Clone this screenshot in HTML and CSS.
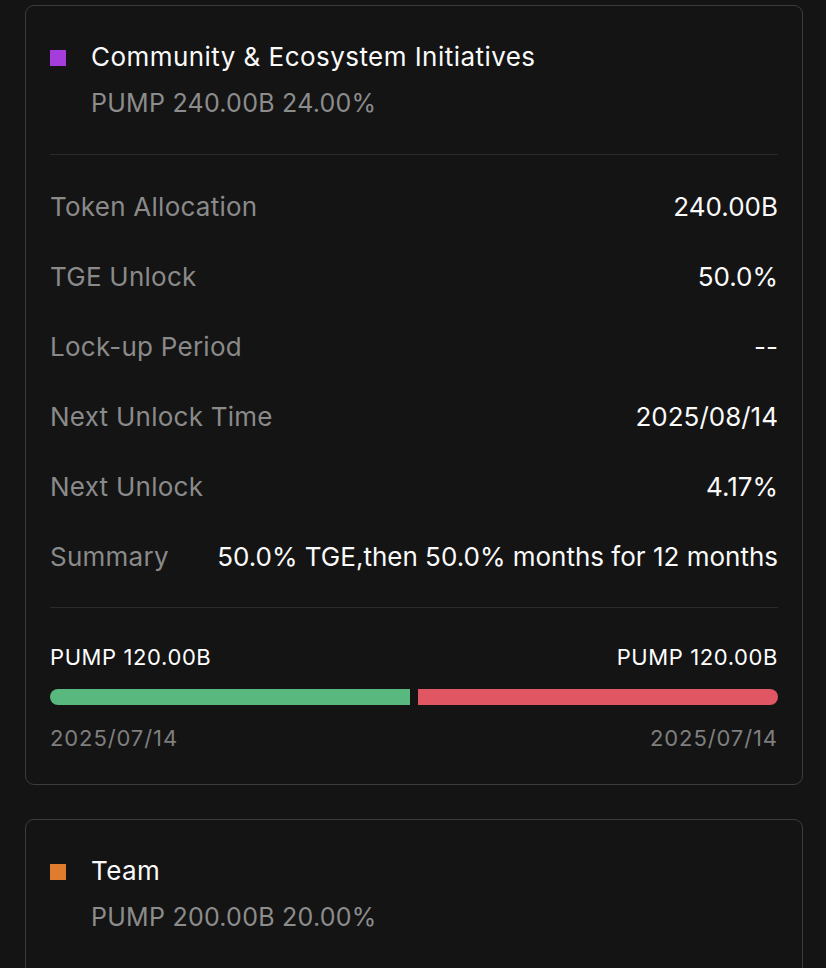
FILE: index.html
```html
<!DOCTYPE html>
<html>
<head>
<meta charset="utf-8">
<link rel="stylesheet" href="styles.css">
</head>
<body>
<div class="page">
  <div class="card">
    <div class="head">
      <span class="sq purple"></span>
      <div class="htext">
        <div class="title">Community &amp; Ecosystem Initiatives</div>
        <div class="sub">PUMP 240.00B 24.00%</div>
      </div>
    </div>
    <div class="divider d1"></div>
    <div class="rows">
      <div class="row"><span class="lbl">Token Allocation</span><span class="val">240.00B</span></div>
      <div class="row"><span class="lbl">TGE Unlock</span><span class="val">50.0%</span></div>
      <div class="row"><span class="lbl">Lock-up Period</span><span class="val">--</span></div>
      <div class="row"><span class="lbl">Next Unlock Time</span><span class="val">2025/08/14</span></div>
      <div class="row"><span class="lbl">Next Unlock</span><span class="val">4.17%</span></div>
      <div class="row"><span class="lbl">Summary</span><span class="val">50.0% TGE,then 50.0% months for 12 months</span></div>
    </div>
    <div class="divider d2"></div>
    <div class="amts"><span>PUMP 120.00B</span><span>PUMP 120.00B</span></div>
    <div class="bar"><span class="g"></span><span class="r"></span></div>
    <div class="dates"><span>2025/07/14</span><span>2025/07/14</span></div>
  </div>
  <div class="card">
    <div class="head">
      <span class="sq orange"></span>
      <div class="htext">
        <div class="title">Team</div>
        <div class="sub">PUMP 200.00B 20.00%</div>
      </div>
    </div>
    <div class="divider d1"></div>
  </div>
</div>
</body>
</html>
```
FILE: styles.css
```css
html, body { margin: 0; padding: 0; background: #141414; }
body { font-family: Inter, "Liberation Sans", sans-serif; color: #fff; }
.page { padding: 5px 23px 0 25px; display: flex; flex-direction: column; gap: 34px; }
.card { border: 1.5px solid #3c3c3c; border-radius: 9px; padding: 34px 24px 34px 24px; }
.head { display: flex; align-items: flex-start; }
.sq { width: 16px; height: 16px; margin-top: 10px; margin-right: 25px; flex: none; }
.purple { background: #a43ddb; }
.orange { background: #e07c2e; }
.title { font-size: 26px; line-height: 34px; color: #fafafa; letter-spacing: 0.45px; }
.sub { font-size: 25px; line-height: 34px; margin-top: 12px; color: #8c8c8c; letter-spacing: 0.25px; }
.divider { height: 1px; background: #2b2b2b; }
.d1 { margin-top: 34px; }
.rows { margin: 16px 0; }
.row { height: 70px; display: flex; justify-content: space-between; align-items: center; }
.lbl { font-size: 26px; color: #8a8a8a; letter-spacing: 0.25px; }
.val { font-size: 26px; color: #fafafa; letter-spacing: 0; }
.amts { margin-top: 37px; display: flex; justify-content: space-between; font-size: 22px; line-height: 24px; color: #fff; letter-spacing: 0.6px; }
.bar { margin-top: 20px; display: flex; gap: 8px; height: 16px; }
.bar .g { flex: 1; background: #58b87e; border-radius: 8px 0 0 8px; }
.bar .r { flex: 1; background: #e05663; border-radius: 0 8px 8px 0; }
.dates { margin-top: 21px; display: flex; justify-content: space-between; font-size: 22px; line-height: 24px; color: #7f7f7f; letter-spacing: 0.9px; }
```
